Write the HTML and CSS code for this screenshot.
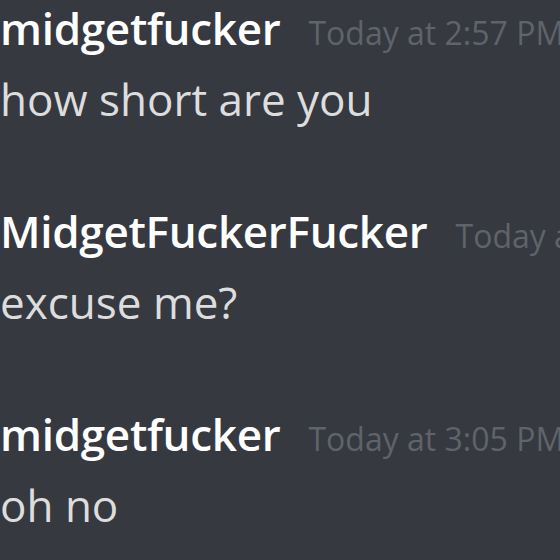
FILE: index.html
```html
<!DOCTYPE html>
<html lang="en">
<head>
<meta charset="utf-8">
<title>Chat</title>
<link rel="stylesheet" href="styles.css">
</head>
<body>
<main class="chat">
  <section class="message-group">
    <div class="header">
      <span class="username">midgetfucker</span>
      <span class="timestamp">Today at 2:57 PM</span>
    </div>
    <div class="content">how short are you</div>
  </section>
  <section class="message-group">
    <div class="header">
      <span class="username">MidgetFuckerFucker</span>
      <span class="timestamp">Today at 3:01 PM</span>
    </div>
    <div class="content">excuse me?</div>
  </section>
  <section class="message-group">
    <div class="header">
      <span class="username">midgetfucker</span>
      <span class="timestamp">Today at 3:05 PM</span>
    </div>
    <div class="content">oh no</div>
  </section>
</main>
</body>
</html>
```

FILE: styles.css
```css
html, body {
  margin: 0;
  padding: 0;
  width: 560px;
  height: 560px;
  overflow: hidden;
  background: #36393f;
}

.chat {
  display: flex;
  flex-direction: column;
  gap: 76px;
  font-family: "Open Sans", "Noto Sans", sans-serif;
}

.message-group {
  display: flex;
  flex-direction: column;
  gap: 15px;
}

.header {
  display: flex;
  align-items: baseline;
  height: 56px;
  white-space: nowrap;
}

.username {
  font-size: 44px;
  line-height: 56px;
  font-weight: 600;
  color: #ffffff;
  letter-spacing: -0.3px;
}

.timestamp {
  margin-left: 28px;
  font-size: 32px;
  line-height: 1;
  color: #5f636b;
}

.content {
  font-size: 44px;
  line-height: 56px;
  color: #dcddde;
  white-space: nowrap;
}
```
